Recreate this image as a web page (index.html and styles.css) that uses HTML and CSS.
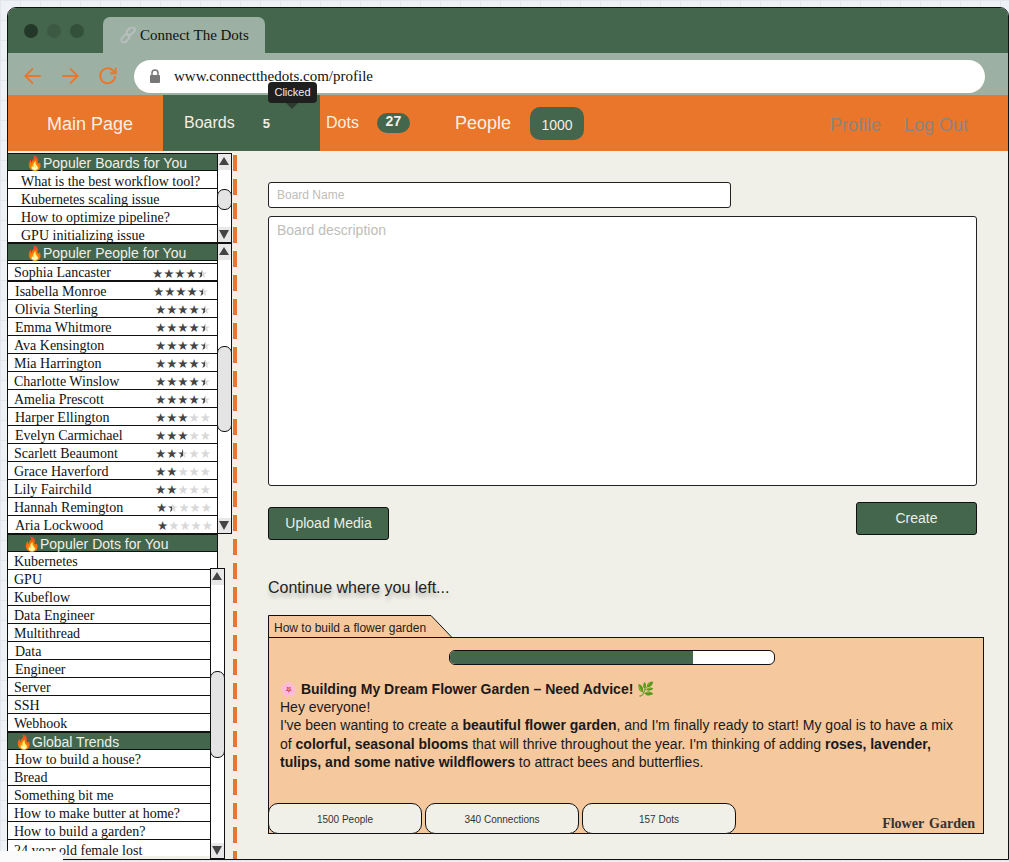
FILE: index.html
```html
<!DOCTYPE html>
<html lang="en">
<head>
    <meta charset="UTF-8">
    <title>Connect The Dots</title>
    <link rel="stylesheet" href="styles.css">
</head>
<body>
    <div class="browser">
        <div class="tab-strip">
            <div class="traffic">
                <span class="dot dot-dark"></span>
                <span class="dot"></span>
                <span class="dot dot-mid"></span>
            </div>
            <div class="tab">
                <svg class="tab-icon" viewBox="0 0 16 16"><rect x="8" y="-0.500" width="5.500" height="9" rx="2.700" transform="rotate(45 10.700 4)"/><rect x="2.500" y="7" width="5.500" height="9" rx="2.700" transform="rotate(45 5.200 11.500)"/></svg>
                Connect The Dots
            </div>
        </div>
        <div class="address-row">
            <svg class="nav-icon" viewBox="0 0 20 20"><path d="M17 10H3M10 3l-7 7 7 7"/></svg>
            <svg class="nav-icon" viewBox="0 0 20 20"><path d="M3 10h14M10 3l7 7-7 7"/></svg>
            <svg class="nav-icon nav-reload" viewBox="0 0 20 20"><path d="M16.500 10a6.800 6.800 0 1 1-2-5l2.500 2.500M17 2.500v5h-5"/></svg>
            <div class="url-pill">
                <svg class="lock" viewBox="0 0 12 14"><path d="M3 6V4a3 3 0 0 1 6 0v2" fill="none" stroke="#777" stroke-width="1.500"/><rect x="1" y="6" width="10" height="8" rx="1" fill="#777"/></svg>
                <span>www.connectthedots.com/profile</span>
            </div>
        </div>

        <nav class="topnav">
            <a class="nav-main">Main Page</a>
            <div class="nav-boards">
                <span class="boards-label">Boards</span>
                <b class="boards-count">5</b>
                <span class="tooltip">Clicked</span>
            </div>
            <div class="nav-dots">
                <span>Dots</span>
                <b class="badge-small">27</b>
            </div>
            <div class="nav-people">
                <span>People</span>
                <span class="badge-large">1000</span>
            </div>
            <div class="nav-right">
                <a>Profile</a>
                <a>Log Out</a>
            </div>
        </nav>

        <div class="content">
            <aside class="sidebar">
                <section class="side-block boards-block">
                    <div class="side-list">
                        <h3 class="side-head head-boards">🔥Populer Boards for You</h3>
                        <div class="row row-in">What is the best workflow tool?</div>
                        <div class="row row-in">Kubernetes scaling issue</div>
                        <div class="row row-in">How to optimize pipeline?</div>
                        <div class="row row-in">GPU initializing issue</div>
                    </div>
                    <div class="scrollbar">
                        <span class="arrow arrow-up"></span>
                        <span class="track"><span class="thumb thumb-boards"></span></span>
                        <span class="arrow arrow-down"></span>
                    </div>
                </section>

                <section class="side-block people-block">
                    <div class="side-list">
                        <h3 class="side-head head-boards">🔥Populer People for You</h3>
                        <div class="person person-first"><span>Sophia Lancaster</span><span class="stars">★★★★<i class="half">★</i></span></div>
                        <div class="person person-second nudge"><span>Isabella Monroe</span><span class="stars">★★★★<i class="half">★</i></span></div>
                        <div class="person nudge"><span>Olivia Sterling</span><span class="stars">★★★★<i class="half">★</i></span></div>
                        <div class="person nudge"><span>Emma Whitmore</span><span class="stars">★★★★<i class="half">★</i></span></div>
                        <div class="person"><span>Ava Kensington</span><span class="stars">★★★★<i class="half">★</i></span></div>
                        <div class="person"><span>Mia Harrington</span><span class="stars">★★★★<i class="half">★</i></span></div>
                        <div class="person"><span>Charlotte Winslow</span><span class="stars">★★★★<i class="half">★</i></span></div>
                        <div class="person"><span>Amelia Prescott</span><span class="stars">★★★★<i class="half">★</i></span></div>
                        <div class="person nudge"><span>Harper Ellington</span><span class="stars">★★★<i class="off">★★</i></span></div>
                        <div class="person nudge"><span>Evelyn Carmichael</span><span class="stars">★★★<i class="off">★★</i></span></div>
                        <div class="person"><span>Scarlett Beaumont</span><span class="stars">★★<i class="half">★</i><i class="off">★★</i></span></div>
                        <div class="person"><span>Grace Haverford</span><span class="stars">★★<i class="off">★★★</i></span></div>
                        <div class="person"><span>Lily Fairchild</span><span class="stars">★★<i class="off">★★★</i></span></div>
                        <div class="person person-hannah"><span>Hannah Remington</span><span class="stars">★<i class="half">★</i><i class="off">★★★</i></span></div>
                        <div class="person person-aria nudge"><span>Aria Lockwood</span><span class="stars">★<i class="off">★★★★</i></span></div>
                    </div>
                    <div class="scrollbar">
                        <span class="arrow arrow-up"></span>
                        <span class="track"><span class="thumb thumb-people"></span></span>
                        <span class="arrow arrow-down"></span>
                    </div>
                </section>

                <section class="side-block dots-block">
                    <div class="side-list">
                        <h3 class="side-head head-dots">🔥Populer Dots for You</h3>
                        <div class="row">Kubernetes</div>
                        <div class="row">GPU</div>
                        <div class="row">Kubeflow</div>
                        <div class="row">Data Engineer</div>
                        <div class="row">Multithread</div>
                        <div class="row nudge">Data</div>
                        <div class="row nudge">Engineer</div>
                        <div class="row">Server</div>
                        <div class="row">SSH</div>
                        <div class="row">Webhook</div>
                        <h3 class="side-head head-trends">🔥Global Trends</h3>
                        <div class="row nudge">How to build a house?</div>
                        <div class="row">Bread</div>
                        <div class="row">Something bit me</div>
                        <div class="row">How to make butter at home?</div>
                        <div class="row">How to build a garden?</div>
                        <div class="row row-cut">24 year old female lost</div>
                    </div>
                    <div class="scrollbar scrollbar-over">
                        <span class="arrow arrow-up"></span>
                        <span class="track"><span class="thumb thumb-dots"></span></span>
                        <span class="arrow arrow-down"></span>
                    </div>
                </section>
            </aside>
            <div class="side-dash"></div>

            <main class="main">
                <div class="field field-name">Board Name</div>
                <div class="field field-desc">Board description</div>
                <div class="actions">
                    <button class="btn btn-upload">Upload Media</button>
                    <button class="btn btn-create">Create</button>
                </div>
                <h2 class="continue">Continue where you left...</h2>

                <div class="folder-tab">
                    <svg class="folder-shape" viewBox="0 0 185 23"><path d="M.5 23V.5H163L184 22.500"/></svg>
                    <span class="folder-label">How to build a flower garden</span>
                </div>
                <article class="card">
                    <div class="progress"><span class="progress-fill"></span></div>
                    <div class="post">
                        <p>🌸 <b>Building My Dream Flower Garden – Need Advice!</b> 🌿</p>
                        <p>Hey everyone!</p>
                        <p>I've been wanting to create a <b>beautiful flower garden</b>, and I'm finally ready to start! My goal is to have a mix of <b>colorful, seasonal blooms</b> that will thrive throughout the year. I'm thinking of adding <b>roses, lavender, tulips, and some native wildflowers</b> to attract bees and butterflies.</p>
                    </div>
                    <div class="card-foot">
                        <div class="stat">1500 People</div>
                        <div class="stat">340 Connections</div>
                        <div class="stat">157 Dots</div>
                        <div class="card-tag">Flower&nbsp; Garden</div>
                    </div>
                </article>
            </main>
        </div>
    </div>
    <div class="corner-patch"></div>
</body>
</html>
```

FILE: styles.css
```css
* {
    box-sizing: border-box;
}
html, body {
    height: 100%;
}
body {
    margin: 0;
    overflow: hidden;
    padding: 7px 0 0 7px;
    background-color: #eef1f6;
    background-image:
        linear-gradient(#e3e6ea 1px, transparent 1px),
        linear-gradient(90deg, #e3e6ea 1px, transparent 1px);
    background-size: 20px 20px;
    font-family: "Liberation Serif", serif;
}
.browser {
    width: 1002px;
    height: 853px;
    border: 1px solid #111;
    border-radius: 9px 9px 0 0;
    background: #f0f0e9;
    overflow: hidden;
}

/* browser chrome */
.tab-strip {
    height: 45px;
    background: #44664c;
    display: flex;
    align-items: flex-end;
}
.traffic {
    display: flex;
    gap: 10px;
    width: 95px;
    padding: 0 0 15px 16px;
}
.dot {
    width: 14px;
    height: 14px;
    border-radius: 50%;
    background: #3c5a43;
}
.dot:nth-child(2) {
    margin-left: -1px;
}
.dot-dark {
    background: #243829;
}
.dot-mid {
    background: #32503a;
    margin-left: -1px;
}
.tab {
    width: 162px;
    height: 36px;
    background: #9db0a4;
    border-radius: 7px 7px 0 0;
    font-size: 15px;
    padding-left: 17px;
    color: #111;
    display: flex;
    align-items: center;
    gap: 4px;
}
.tab-icon {
    width: 16px;
    height: 16px;
    fill: none;
    stroke: #b9c0bf;
    stroke-width: 1.800;
}
.address-row {
    height: 42px;
    background: #9db0a4;
    display: flex;
    align-items: center;
    padding: 4px 0 0 14px;
}
.nav-icon {
    width: 22px;
    height: 22px;
    margin-right: 15px;
    fill: none;
    stroke: #ea762b;
    stroke-width: 1.700;
}
.nav-reload {
    margin-left: 1px;
    margin-right: 15px;
}
.url-pill {
    width: 851px;
    height: 33px;
    background: #fff;
    border-radius: 17px;
    display: flex;
    align-items: center;
    padding-left: 15px;
    font-size: 15px;
    color: #111;
}
.lock {
    width: 12px;
    height: 14px;
    margin-right: 13px;
}

/* orange nav */
.topnav {
    height: 56px;
    background: #ea762b;
    display: flex;
    align-items: stretch;
    font-family: "Liberation Sans", sans-serif;
    color: #f5efe6;
}
.nav-main {
    width: 155px;
    padding-left: 39px;
    font-size: 18px;
    line-height: 59px;
}
.nav-boards {
    position: relative;
    width: 157px;
    background: #44664c;
    padding-left: 21px;
    display: flex;
    align-items: center;
    font-size: 16px;
}
.boards-count {
    margin-left: 28px;
    font-size: 13px;
}
.tooltip {
    position: absolute;
    top: -13px;
    left: 105px;
    width: 49px;
    height: 21px;
    border-radius: 4px;
    background: #1f1f1f;
    color: #f0f0f0;
    font-size: 11px;
    line-height: 21px;
    text-align: center;
}
.tooltip::after {
    content: "";
    position: absolute;
    top: 21px;
    left: 18px;
    border: 6px solid transparent;
    border-top: 6px solid #2c3a30;
    border-bottom: 0;
}
.nav-dots {
    display: flex;
    align-items: center;
    width: 135px;
    padding-left: 6px;
    font-size: 16px;
}
.badge-small {
    margin-left: 18px;
    width: 33px;
    height: 20px;
    border-radius: 10px;
    background: #44664c;
    font-size: 14px;
    line-height: 17px;
    text-align: center;
}
.nav-people {
    display: flex;
    align-items: center;
    font-size: 18px;
}
.badge-large {
    margin-left: 19px;
    width: 54px;
    height: 33px;
    border-radius: 10px;
    background: #44664c;
    font-size: 14px;
    line-height: 36px;
    text-align: center;
}
.nav-right {
    margin-left: auto;
    display: flex;
    gap: 23px;
    padding: 20px 40px 0 0;
    color: #8a8580;
    font-size: 18px;
}

/* sidebar */
.content {
    display: flex;
    height: 708px;
}
.sidebar {
    width: 224px;
    padding-top: 2px;
    flex: none;
}
.side-block {
    display: flex;
    position: relative;
}
.side-list {
    width: 210px;
    background: #fff;
    flex: none;
}
.side-head {
    margin: 0;
    height: 18px;
    background: #44664c;
    border: 1px solid #111;
    border-width: 1px 1px 1px 0;
    color: #f0f0e9;
    font: 400 14px/18px "Liberation Sans", sans-serif;
}
.head-boards {
    padding-left: 18px;
}
.head-dots {
    padding-left: 15px;
}
.head-trends {
    padding-left: 7px;
}
.row, .person {
    height: 18px;
    border-bottom: 1px solid #111;
    border-right: 1px solid #111;
    font-size: 14px;
    line-height: 19px;
    padding-left: 6px;
    color: #111;
    white-space: nowrap;
    overflow: hidden;
}
.row-in {
    padding-left: 13px;
    line-height: 21px;
}
.row-cut {
    height: 16px;
    border-bottom: 0;
    line-height: 21px;
}
.person {
    display: flex;
    justify-content: space-between;
    padding-right: 6px;
}
.nudge {
    padding-left: 7px;
}
.person-first {
    margin-top: 2px;
    border-top: 1px solid #111;
    border-bottom: 2px solid #111;
    height: 19px;
    line-height: 18px;
    padding-right: 9px;
}
.person-second {
    padding-right: 8px;
}
.person-hannah {
    padding-right: 5px;
}
.person-aria {
    padding-right: 4px;
}
.stars {
    font: 12.500px/19px "DejaVu Sans", sans-serif;
    color: #444;
}
.stars i {
    font-style: normal;
}
.half {
    background: linear-gradient(90deg, #444 50%, #d8d8d8 50%);
    -webkit-background-clip: text;
    background-clip: text;
    color: transparent;
}
.off {
    color: #d8d8d8;
}
.scrollbar {
    width: 15px;
    margin-left: -1px;
    background: #fff;
    border: 1px solid #111;
    display: flex;
    flex-direction: column;
    position: relative;
}
.scrollbar-over {
    position: absolute;
    left: 202px;
    top: 34px;
    height: 291px;
    margin-left: 0;
}
.arrow {
    height: 15px;
    background: #e8e8e8;
    flex: none;
    position: relative;
}
.arrow-up {
    height: 16px;
}
.arrow::after {
    content: "";
    position: absolute;
    left: 1px;
    border: 5.500px solid transparent;
}
.arrow-up::after {
    top: 3px;
    border-top: 0;
    border-bottom: 8px solid #444;
}
.arrow-down::after {
    top: 3px;
    border-bottom: 0;
    border-top: 9px solid #444;
}
.track {
    flex: 1;
    display: block;
}
.thumb {
    display: block;
    background: #e4e4e4;
    border: 1px solid #111;
    border-radius: 7px;
    margin: 0 -1px;
}
.thumb-boards {
    height: 21px;
    margin-top: 19px;
}
.thumb-people {
    height: 86px;
    margin-top: 86px;
}
.thumb-dots {
    height: 87px;
    margin-top: 86px;
}
.side-dash {
    width: 4px;
    margin: 4px 0 0 1px;
    flex: none;
    background: repeating-linear-gradient(#ea762b 0 16px, transparent 16px 24px);
}

/* main area */
.main {
    flex: 1;
    padding: 31px 24px 0 31px;
    font-family: "Liberation Sans", sans-serif;
}
.field {
    background: #fff;
    border: 1px solid #222;
    border-radius: 3px;
    color: #c0bdb8;
    padding-left: 8px;
}
.field-name {
    width: 463px;
    height: 26px;
    font-size: 12px;
    line-height: 24px;
}
.field-desc {
    margin-top: 8px;
    width: 709px;
    height: 270px;
    font-size: 14px;
    line-height: 26px;
}
.actions {
    width: 709px;
    display: flex;
    justify-content: space-between;
    align-items: flex-start;
    margin-top: 16px;
}
.btn {
    background: #44664c;
    border: 1px solid #111;
    border-radius: 3px;
    color: #e8f0e8;
    height: 33px;
    width: 121px;
    padding-bottom: 2px;
    font: 14px "Liberation Sans", sans-serif;
}
.btn-upload {
    margin-top: 5px;
}
.continue {
    margin: 0;
    padding-top: 38px;
    font-size: 16px;
    font-weight: 400;
    line-height: 20px;
    color: #222;
    text-shadow: 1px 4px 4px rgba(0, 0, 0, 0.25);
}
.folder-tab {
    position: relative;
    margin-top: 17px;
    width: 185px;
    height: 23px;
    margin-bottom: -1px;
}
.folder-shape {
    display: block;
    width: 185px;
    height: 23px;
    fill: #f5c89e;
    stroke: #111;
}
.folder-label {
    position: absolute;
    left: 6px;
    top: 6px;
    font-size: 12px;
    line-height: 14px;
    color: #222;
}
.card {
    width: 716px;
    height: 197px;
    background: #f5c89e;
    border: 1px solid #111;
    position: relative;
    display: flex;
    flex-direction: column;
}
.progress {
    width: 326px;
    height: 15px;
    margin: 12px 0 0 180px;
    border: 1px solid #111;
    border-radius: 6px;
    background: #fff;
    overflow: hidden;
    flex: none;
}
.progress-fill {
    display: block;
    width: 75%;
    height: 100%;
    background: #44664c;
}
.post {
    padding: 15px 20px 0 11px;
    font-size: 14px;
    line-height: 18.200px;
    color: #1a1a1a;
}
.post p {
    margin: 0;
}
.card-foot {
    margin: auto 0 0 -1px;
    display: flex;
    gap: 3px;
    height: 30px;
    align-items: flex-end;
}
.stat {
    width: 154px;
    height: 31px;
    background: #f0f0e9;
    border: 1px solid #111;
    border-radius: 10px;
    font-size: 10px;
    line-height: 31px;
    text-align: center;
    color: #333;
    margin-bottom: -1px;
}
.card-tag {
    margin-left: auto;
    padding-right: 8px;
    font: 700 14px/18px "Liberation Serif", serif;
    word-spacing: -1px;
    color: #333;
}
.corner-patch {
    position: absolute;
    left: 0;
    top: 851px;
    width: 63px;
    height: 11px;
    background: #fbfbfb;
    border-radius: 0 6px 0 0;
}
```
